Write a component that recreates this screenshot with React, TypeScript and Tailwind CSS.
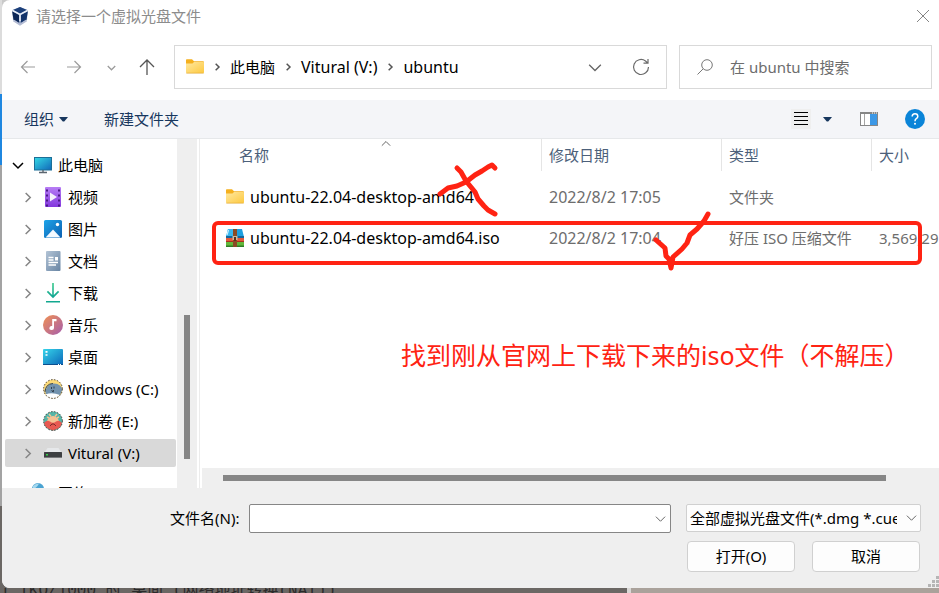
import type { ReactNode } from "react";

const UI_FONT = "font-['Noto_Sans','Noto_Sans_CJK_SC',sans-serif]";

function Chevron({ dir, className }: { dir: "down" | "right" | "up"; className: string }) {
  const d = { down: "M1 4 L6 9 L11 4", right: "M4 1 L9 6 L4 11", up: "M1 8 L6 3 L11 8" }[dir];
  return (
    <svg viewBox="0 0 12 12" className={className} fill="none" stroke="currentColor" aria-hidden="true">
      <path d={d} vectorEffect="non-scaling-stroke" />
    </svg>
  );
}

function CaretDown() {
  return (
    <svg viewBox="0 0 9 5" className="h-[5px] w-[9px]" aria-hidden="true">
      <path d="M0 0H9L5.5 4.2Q4.5 5 3.5 4.2Z" fill="#17375e" />
    </svg>
  );
}

function AppLogo() {
  return (
    <svg viewBox="0 0 18 20" className="h-5 w-[18px]" aria-hidden="true">
      <path d="M9 1L16.5 4L16 14L9 19L2 14L1.5 4Z" fill="#8a9cbd" />
      <path d="M9 1L16 4L9 8L2 4Z" fill="#1c3f7a" />
      <path d="M1 5L8 9V17L2.500 13.500Z" fill="#0c2757" />
      <path d="M17 5L10 9V17L15.500 13.500Z" fill="#12336b" />
      <path d="M1.500 4.500L9 8.500L16.500 4.500M9 8.500V15" stroke="#e8eef8" strokeWidth="1.500" fill="none" />
      <path d="M2.500 14.500L9 18.500L15.500 14.500" stroke="#b3bbd3" strokeWidth="2" fill="none" />
    </svg>
  );
}

function FolderIcon() {
  return (
    <svg viewBox="0 0 18 15" className="h-[15px] w-[18px] shrink-0" aria-hidden="true">
      <defs>
        <linearGradient id="folder" x1="0" y1="0" x2="1" y2="1">
          <stop offset="0" stopColor="#ffe8a0" />
          <stop offset="1" stopColor="#fdc940" />
        </linearGradient>
      </defs>
      <path d="M0 1Q0 .3 .8 .3H6L8 2.300H17Q18 2.300 18 3V7H0Z" fill="#f5b01e" />
      <path d="M0 4.500H6.500L8 3H17.300Q18 3 18 3.800V13.300Q18 14 17.300 14H.7Q0 14 0 13.300Z" fill="url(#folder)" />
      <path d="M.3 14.200H17.700" stroke="#e3a72c" strokeWidth=".7" />
    </svg>
  );
}

function ArchiveIcon() {
  return (
    <svg viewBox="0 0 20 18" className="h-[18px] w-5 shrink-0" aria-hidden="true">
      <path d="M3 0H17L19 8H1Z" fill="#1c9fe0" />
      <path d="M3 0H8V8H1Z" fill="#38b6ee" />
      <path d="M3.500 1L2 6" stroke="#c9efff" strokeWidth="1.200" />
      <rect x="1" y="7" width="18" height="2" fill="#13689f" />
      <rect x="1" y="9" width="18" height="4" fill="#e3593c" />
      <rect x="1" y="12" width="18" height="1" fill="#a9301e" />
      <rect x="1" y="13" width="18" height="4" fill="#62b83b" />
      <rect x="1" y="16.500" width="18" height="1.500" fill="#2d7e25" />
      <rect x="8" y="0" width="4" height="18" fill="#8a4b25" />
      <rect x="7.500" y="7" width="5" height="4" fill="#c9b8a2" />
      <rect x="9" y="8" width="2" height="4" fill="#56301a" />
    </svg>
  );
}

const icon = "h-5 w-5 shrink-0";

function PcIcon() {
  return (
    <svg viewBox="0 0 20 20" className={icon} aria-hidden="true">
      <defs>
        <linearGradient id="pc" x1="0" y1="0" x2="1" y2="1">
          <stop offset="0" stopColor="#35dbe6" />
          <stop offset="1" stopColor="#1167b8" />
        </linearGradient>
      </defs>
      <rect x="1.500" y="2.500" width="17" height="12.500" fill="url(#pc)" stroke="#1c6f97" />
      <path d="M10 15V17.500M6 17.500H14" stroke="#5b6670" strokeWidth="1.400" />
    </svg>
  );
}

function VideoIcon() {
  return (
    <svg viewBox="0 0 20 20" className={icon} aria-hidden="true">
      <defs>
        <linearGradient id="vid" x1="0" y1="0" x2="0" y2="1">
          <stop offset="0" stopColor="#b77df5" />
          <stop offset="1" stopColor="#8338dd" />
        </linearGradient>
      </defs>
      <rect x="2" y="0" width="16" height="20" rx="1" fill="url(#vid)" />
      <path d="M4 2.500V20M16 2.500V20" stroke="#4b1a86" strokeWidth="2" strokeDasharray="2 3" />
      <path d="M7 5.500L14 10L7 14.500Z" fill="#f5f0fc" />
    </svg>
  );
}

function PictureIcon() {
  return (
    <svg viewBox="0 0 20 20" className={icon} aria-hidden="true">
      <defs>
        <linearGradient id="pic" x1="0" y1="0" x2="1" y2="1">
          <stop offset="0" stopColor="#1ea4e9" />
          <stop offset="1" stopColor="#0b5fb0" />
        </linearGradient>
      </defs>
      <rect x="1" y="1" width="18" height="18" rx="1.500" fill="url(#pic)" />
      <path d="M2.500 18.500L10 10.500L17.500 18.500Z" fill="#f3f9ff" />
      <circle cx="14.500" cy="5.500" r="1.700" fill="#fff" />
    </svg>
  );
}

function DocumentIcon() {
  return (
    <svg viewBox="0 0 20 20" className={icon} aria-hidden="true">
      <defs>
        <linearGradient id="doc" x1="0" y1="0" x2="1" y2="1">
          <stop offset="0" stopColor="#b3c4d6" />
          <stop offset="1" stopColor="#6784a3" />
        </linearGradient>
      </defs>
      <rect x="3" y="0" width="14.500" height="20" rx="1" fill="url(#doc)" />
      <path d="M5.500 6.500H10.500M5.500 9H10.500M5.500 11.500H15M5.500 14H13" stroke="#fff" strokeWidth="1.300" />
      <rect x="12" y="6" width="3" height="3.500" fill="#fff" />
    </svg>
  );
}

function DownloadIcon() {
  return (
    <svg viewBox="0 0 20 20" className={icon} aria-hidden="true">
      <defs>
        <linearGradient id="dl" x1="0" y1="0" x2="0" y2="1">
          <stop offset="0" stopColor="#37c98a" />
          <stop offset="1" stopColor="#0ea394" />
        </linearGradient>
      </defs>
      <path d="M9.200 0H10.800V12L15 7.800L16.200 9L10 15.200L3.800 9L5 7.800L9.200 12Z" fill="url(#dl)" />
      <rect x="3" y="18" width="14" height="1.500" fill="#12a88f" />
    </svg>
  );
}

function MusicIcon() {
  return (
    <svg viewBox="0 0 20 20" className={icon} aria-hidden="true">
      <defs>
        <linearGradient id="mus" x1="0" y1="0" x2="1" y2="1">
          <stop offset="0" stopColor="#f19152" />
          <stop offset="1" stopColor="#a55dae" />
        </linearGradient>
      </defs>
      <circle cx="10" cy="10" r="10" fill="url(#mus)" />
      <path d="M9.200 4H13.500V6.300H11V13A2.300 2 0 1 1 9.200 11Z" fill="#fff" />
    </svg>
  );
}

function DesktopIcon() {
  return (
    <svg viewBox="0 0 20 20" className={icon} aria-hidden="true">
      <defs>
        <linearGradient id="desk" x1="0" y1="0" x2="1" y2="1">
          <stop offset="0" stopColor="#36d5ea" />
          <stop offset="1" stopColor="#0b67b9" />
        </linearGradient>
      </defs>
      <rect x="0" y="2" width="20" height="16" rx="1" fill="url(#desk)" />
      <path d="M2.500 4.800H4.500M2.500 8H4.500" stroke="#fff" strokeWidth="1.700" />
      <path d="M0 17.500H20" stroke="#0d4f8e" />
      <path d="M15 17.500H19" stroke="#fff" strokeDasharray="1 1" />
    </svg>
  );
}

function PenguinDiskIcon() {
  return (
    <svg viewBox="0 0 20 20" className={icon} aria-hidden="true">
      <circle cx="10" cy="10" r="9.500" fill="#fbd976" />
      <path d="M2.500 14Q3 4.500 11 4.500Q18.500 5 19.300 11L17 16H4Z" fill="#7393ae" />
      <path d="M2.500 15.500Q9 13 17 16Q14 19.500 10 19.500Q5 19.500 2.500 15.500Z" fill="#fff" />
      <path d="M2 13Q2.500 4.800 10 4.500" stroke="#344556" fill="none" />
      <path d="M8.500 8V10M11 7.500V9.500M8.500 11.500L11 13M11 11L9 13" stroke="#33414e" fill="none" />
      <circle cx="10" cy="10" r="9.400" fill="none" stroke="#4b4034" strokeDasharray="1.500 1.500" />
    </svg>
  );
}

function CharacterDiskIcon() {
  return (
    <svg viewBox="0 0 20 20" className={icon} aria-hidden="true">
      <circle cx="10" cy="10" r="9.500" fill="#55b5a8" />
      <path d="M4 10Q5 7 7 6Q10 4 13 6Q15 7 16 10Q16 12 10 12Q4 12 4 10Z" fill="#f6c193" />
      <path d="M6 3L8 5.500M14 3L12 5.500M4 6L6 7M16 6L14 7" stroke="#f6c193" strokeWidth="1.500" />
      <path d="M1 12Q4 8.500 7 10.500Q10 13 13 10.500Q16 8.500 19 12Q18 17.500 10 19.500Q2 17.500 1 12Z" fill="#e85a52" />
      <path d="M7 15L9 13H11L13 15" stroke="#7c2b2b" fill="none" />
      <circle cx="10" cy="10" r="9.400" fill="none" stroke="#45413e" strokeDasharray="1.500 1.500" />
    </svg>
  );
}

function DriveIcon() {
  return (
    <svg viewBox="0 0 20 20" className={icon} aria-hidden="true">
      <path d="M4.500 5H15.500L18.500 9.500H1.500Z" fill="#e6e8ea" />
      <rect x="1" y="9" width="18" height="6" rx=".5" fill="#3d3f41" />
      <path d="M1 14.500H19" stroke="#77797b" />
      <rect x="3" y="11" width="2" height="1.500" fill="#35d04a" />
    </svg>
  );
}

function NetworkIcon() {
  return (
    <svg viewBox="0 0 20 20" className={icon} aria-hidden="true">
      <circle cx="7" cy="6" r="6" fill="#4aa3d2" />
      <path d="M2 3Q5 0 8 .5Q6 5 2 6Z" fill="#a5d8ee" />
      <rect x="7" y="9" width="12" height="8" fill="#2378b5" />
    </svg>
  );
}

const treeItems: { name: string; icon: ReactNode; selected?: boolean }[] = [
  { name: "视频", icon: <VideoIcon /> },
  { name: "图片", icon: <PictureIcon /> },
  { name: "文档", icon: <DocumentIcon /> },
  { name: "下载", icon: <DownloadIcon /> },
  { name: "音乐", icon: <MusicIcon /> },
  { name: "桌面", icon: <DesktopIcon /> },
  { name: "Windows (C:)", icon: <PenguinDiskIcon /> },
  { name: "新加卷 (E:)", icon: <CharacterDiskIcon /> },
  { name: "Vitural (V:)", icon: <DriveIcon />, selected: true },
];

const files = [
  { name: "ubuntu-22.04-desktop-amd64", date: "2022/8/2 17:05", type: "文件夹", size: "", icon: <FolderIcon /> },
  {
    name: "ubuntu-22.04-desktop-amd64.iso",
    date: "2022/8/2 17:04",
    type: "好压 ISO 压缩文件",
    size: "3,569,29",
    icon: <ArchiveIcon />,
  },
];

function TitleBar() {
  return (
    <header className="flex h-[33px] shrink-0 items-center gap-[7px] pb-px pl-[9px] pr-2 text-[#8c8c8c]">
      <AppLogo />
      <h1>请选择一个虚拟光盘文件</h1>
      <button aria-label="关闭" className="ml-auto p-px">
        <svg viewBox="0 0 14 14" className="h-[14px] w-[14px]" stroke="#858585" fill="none">
          <path d="M1 1L13 13M13 1L1 13" />
        </svg>
      </button>
    </header>
  );
}

function NavBar() {
  return (
    <nav className="flex shrink-0 items-center pb-[11px] pr-[7px] pt-3">
      <div className="flex w-[172px] shrink-0 items-center pl-[18px] text-[#9b9b9b]">
        <button aria-label="后退">
          <svg viewBox="0 0 16 16" className="h-4 w-4" fill="none" stroke="currentColor" strokeWidth="1.200">
            <path d="M15 8H1.500M7.500 2L1.500 8L7.500 14" />
          </svg>
        </button>
        <button aria-label="前进" className="ml-[30px]">
          <svg viewBox="0 0 16 16" className="h-4 w-4" fill="none" stroke="currentColor" strokeWidth="1.200">
            <path d="M1 8H14.500M8.500 2L14.500 8L8.500 14" />
          </svg>
        </button>
        <button aria-label="最近浏览的位置" className="ml-[25px]">
          <Chevron dir="down" className="h-[9px] w-[9px] stroke-[1.3]" />
        </button>
        <button aria-label="上移" className="ml-[22px] text-[#555]">
          <svg viewBox="0 0 18 18" className="h-[18px] w-[18px]" fill="none" stroke="currentColor" strokeWidth="1.300">
            <path d="M9 17V2M2 9L9 2L16 9" />
          </svg>
        </button>
      </div>
      <div className="flex h-11 min-w-0 flex-1 items-center border border-[#d9d9d9] pb-px pl-[11px] pr-4 text-black">
        <FolderIcon />
        <Chevron dir="right" className="mx-[9px] h-2 w-2 stroke-[1.5] text-[#555]" />
        <button>此电脑</button>
        <Chevron dir="right" className="mx-[9px] h-2 w-2 stroke-[1.5] text-[#555]" />
        <button className="whitespace-nowrap text-base leading-5">Vitural (V:)</button>
        <Chevron dir="right" className="mx-[9px] h-2 w-2 stroke-[1.5] text-[#555]" />
        <button className="text-base leading-5">ubuntu</button>
        <button aria-label="以前的位置" className="ml-auto text-[#666]">
          <Chevron dir="down" className="h-[14px] w-[14px] stroke-[1.3]" />
        </button>
        <button aria-label="刷新" className="ml-[30px]">
          <svg viewBox="0 0 18 18" className="h-[18px] w-[18px]" fill="none" stroke="#6b6b6b" strokeWidth="1.200">
            <path d="M16.500 9A7.500 7.500 0 1 1 13.500 3L16 5.200M16 1V5.200H11.500" />
          </svg>
        </button>
      </div>
      <label className="ml-3 flex h-11 w-[253px] items-center border border-[#d9d9d9] pb-px pl-[17px]">
        <svg viewBox="0 0 16 16" className="h-4 w-4 shrink-0" fill="none" stroke="#777" aria-hidden="true">
          <circle cx="10" cy="6" r="5.300" />
          <path d="M6.200 9.800L.5 15.500" />
        </svg>
        <input
          aria-label="搜索"
          placeholder="在 ubuntu 中搜索"
          className="ml-[17px] min-w-0 flex-1 outline-none placeholder:text-[#6d6d6d]"
        />
      </label>
    </nav>
  );
}

function Toolbar() {
  return (
    <div className="flex h-[39px] shrink-0 items-center border-b border-[#e6e8ea] bg-[#f4f5f8] pl-[22px] pr-[14px] text-[#17375e]">
      <button className="flex items-center gap-[5px]">
        组织
        <CaretDown />
      </button>
      <button className="ml-9">新建文件夹</button>
      <button aria-label="更改视图" className="ml-auto flex items-center">
        <span className="bg-[#efefef] p-[3px]">
          <svg viewBox="0 0 14 14" className="h-[14px] w-[14px]" stroke="#000">
            <path d="M0 .5H14M0 4.500H14M0 8.500H14M0 12.500H14" />
          </svg>
        </span>
        <span className="ml-3">
          <CaretDown />
        </span>
      </button>
      <button aria-label="预览窗格" className="ml-7">
        <svg viewBox="0 0 18 14" className="h-[14px] w-[18px]">
          <rect x=".5" y=".5" width="17" height="13" fill="#fff" stroke="#868686" />
          <path d="M0 1H18" stroke="#868686" strokeWidth="2" />
          <path d="M4.500 2V13" stroke="#a5a5a5" />
          <rect x="10" y="2" width="7" height="11" fill="#3c98e6" />
          <path d="M12 1H17" stroke="#fff" strokeDasharray="1 1" />
        </svg>
      </button>
      <button aria-label="获取帮助" className="ml-[27px]">
        <svg viewBox="0 0 20 20" className="h-5 w-5" fill="none">
          <circle cx="10" cy="10" r="10" fill="#0a84d8" />
          <path d="M7.200 7.600Q7.200 4.800 10 4.800Q12.800 4.800 12.800 7.400Q12.800 8.700 11.300 9.700Q10 10.600 10 12.200" stroke="#fff" strokeWidth="1.500" />
          <circle cx="10" cy="14.800" r="1" fill="#fff" />
        </svg>
      </button>
    </div>
  );
}

function Sidebar() {
  return (
    <aside className="flex w-[198px] shrink-0 border-r border-[#ececec] pr-[2px]">
      <ul className="flex min-w-0 flex-1 flex-col gap-1 overflow-hidden pl-[3px] pr-px pt-3 text-black">
        <li className="flex h-7 shrink-0 items-center pl-[7px]">
          <Chevron dir="down" className="h-3 w-3 stroke-[1.5]" />
          <span className="ml-[9px]">
            <PcIcon />
          </span>
          <span className="ml-[5px]">此电脑</span>
        </li>
        {treeItems.map((item) => (
          <li
            key={item.name}
            className={
              item.selected
                ? "flex h-7 shrink-0 items-center rounded-xs bg-[#d9d9d9] pl-[17px]"
                : "flex h-7 shrink-0 items-center pl-[17px]"
            }
          >
            <Chevron dir="right" className="h-[11px] w-[11px] stroke-[1.5] text-[#858585]" />
            <span className="ml-[10px]">{item.icon}</span>
            <span className="ml-[5px] whitespace-nowrap">{item.name}</span>
          </li>
        ))}
        <li className="mt-2 flex h-7 shrink-0 items-center pl-[26px]">
          <NetworkIcon />
          <span className="ml-[7px]">网络</span>
        </li>
      </ul>
      <div className="flex w-5 shrink-0 flex-col items-center bg-[#efefef] pt-44">
        <div className="h-36 w-[6px] bg-[#868686]" />
      </div>
    </aside>
  );
}

function Annotations() {
  return (
    <>
      <div className="pointer-events-none absolute left-3 right-[17px] top-[82px] h-11 rounded-md border-4 border-[#ff2313]" />
      <svg
        viewBox="200 139 540 140"
        className="pointer-events-none absolute left-0 top-0 h-[140px] w-[540px]"
        fill="none"
        stroke="#ff2313"
        strokeWidth="5"
        strokeLinecap="round"
        strokeLinejoin="round"
        aria-hidden="true"
      >
        <path d="M440 194L448 188L457 186L466 182L475 175L482 171L488 167L492 165L495 168" />
        <path d="M457 168L461 172L466 181L475 192L478 199L484 206L488 210L495 214" />
        <path d="M656 240L665 248L666 256L669 259L671 268L673 257L682 249L687 243L690 235L697 229L704 221L708 214" />
      </svg>
      <p className="pointer-events-none absolute left-[201px] top-[198px] whitespace-nowrap text-[25px] leading-9 text-[#ff2313]">
        找到刚从官网上下载下来的iso文件（不解压）
      </p>
    </>
  );
}

function FileList() {
  const head = "block h-8 whitespace-nowrap border-l border-[#e5e5e5] pl-[7px] leading-8";
  return (
    <main className="flex min-w-0 flex-1 flex-col">
      <div className="relative min-h-0 flex-1 overflow-hidden">
        <table className="w-full table-fixed text-left text-[#6d6d6d]">
          <colgroup>
            <col />
            <col className="w-[180px]" />
            <col className="w-[150px]" />
            <col className="w-[68px]" />
          </colgroup>
          <thead>
            <tr className="text-[#4c607a]">
              <th className="p-0 pb-[5px] font-normal">
                <span className="flex h-8 pl-[39px] leading-8">
                  名称
                  <span className="mx-auto pr-[38px] text-[#666]">
                    <Chevron dir="up" className="h-[10px] w-[10px]" />
                  </span>
                </span>
              </th>
              <th className="p-0 pb-[5px] font-normal">
                <span className={head}>修改日期</span>
              </th>
              <th className="p-0 pb-[5px] font-normal">
                <span className={head}>类型</span>
              </th>
              <th className="p-0 pb-[5px] font-normal">
                <span className={head}>大小</span>
              </th>
            </tr>
          </thead>
          <tbody>
            {files.map((file) => (
              <tr key={file.name} className="h-[41px] whitespace-nowrap">
                <td className="p-0 pl-[25px] text-black">
                  <span className="flex items-center">
                    <span className="flex w-5 justify-center">{file.icon}</span>
                    <span className="ml-[5px] text-base leading-5">{file.name}</span>
                  </span>
                </td>
                <td className="p-0 pl-2 text-base leading-5">{file.date}</td>
                <td className="p-0 pl-2">{file.type}</td>
                <td className="p-0 pl-2">{file.size}</td>
              </tr>
            ))}
          </tbody>
        </table>
        <Annotations />
      </div>
      <div className="ml-[2px] flex h-5 shrink-0 items-center bg-[#efefef] pl-[21px] pr-[53px]">
        <div className="h-[6px] w-full bg-[#868686]" />
      </div>
    </main>
  );
}

function Footer() {
  return (
    <footer className="flex h-[100px] shrink-0 flex-col bg-[#efefef] pl-[168px] pr-[18px] pt-4 text-black">
      <div className="flex">
        <label htmlFor="filename" className="flex h-7 w-[79px] items-center whitespace-nowrap">
          文件名(N):
        </label>
        <div className="flex h-[29px] min-w-0 flex-1 items-center rounded-xs border border-[#868686] bg-white pr-1">
          <input id="filename" className="h-full min-w-0 flex-1 px-1 outline-none" />
          <button aria-label="文件名历史" className="text-[#666]">
            <Chevron dir="down" className="h-[11px] w-[11px]" />
          </button>
        </div>
        <div className="relative ml-[15px] w-[235px]">
          <select
            aria-label="文件类型"
            className="h-7 w-full appearance-none overflow-hidden rounded-xs border border-[#d0d0d0] bg-[#fdfdfd] pl-[3px] pr-[23px]"
          >
            <option>全部虚拟光盘文件(*.dmg *.cue *.iso)</option>
          </select>
          <span className="pointer-events-none absolute right-1 top-2 text-[#666]">
            <Chevron dir="down" className="h-[11px] w-[11px]" />
          </span>
        </div>
      </div>
      <div className="mr-px mt-2 flex justify-end gap-[17px]">
        <button className="h-[31px] w-[108px] rounded-sm border border-[#d0d0d0] bg-[#fdfdfd] pb-px">打开(O)</button>
        <button className="h-[31px] w-[108px] rounded-sm border border-[#d0d0d0] bg-[#fdfdfd] pb-px">取消</button>
      </div>
    </footer>
  );
}

function SizeGrip() {
  return (
    <svg viewBox="0 0 12 12" className="absolute bottom-0 right-0 h-3 w-3" fill="#b5b5b5" aria-hidden="true">
      <rect x="9" y="0" width="3" height="3" />
      <rect x="5" y="4" width="3" height="3" />
      <rect x="9" y="4" width="3" height="3" />
      <rect x="1" y="8" width="3" height="3" />
      <rect x="5" y="8" width="3" height="3" />
      <rect x="9" y="8" width="3" height="3" />
    </svg>
  );
}

export default function App() {
  return (
    <div className={`flex h-screen min-h-[480px] flex-col overflow-hidden bg-[#6b6764] text-[15px] leading-5 ${UI_FONT}`}>
      <div className="flex min-h-0 flex-1 bg-linear-to-b from-[#c9c9c9] from-80% to-[#6b6764] to-95%">
        <div className="flex w-[2px] shrink-0 flex-col">
          <div className="h-[94px] bg-[#dcdcdc]" />
          <div className="h-[71px] bg-[#1f87e0]" />
          <div className="flex-1 bg-[#a3a3a3]" />
          <div className="h-[82px] bg-[#6b6764]" />
        </div>
        <div className="relative flex min-w-0 flex-1 flex-col overflow-hidden rounded-l-lg bg-white">
          <TitleBar />
          <NavBar />
          <Toolbar />
          <div className="flex min-h-0 flex-1">
            <Sidebar />
            <FileList />
          </div>
          <Footer />
          <SizeGrip />
        </div>
      </div>
      <div className="flex h-[5px] shrink-0 items-center overflow-hidden whitespace-nowrap font-['Liberation_Mono','Noto_Sans_CJK_SC',monospace] text-base leading-5 text-[#2b2a2a]">
        <span className="w-[627px] shrink-0">1 TKO/1000 时 桌面 (网络地址转换(NAT))</span>
        <span className="h-full flex-1 border-l-4 border-[#dad8d6] bg-[#aaa29b]" />
      </div>
    </div>
  );
}
